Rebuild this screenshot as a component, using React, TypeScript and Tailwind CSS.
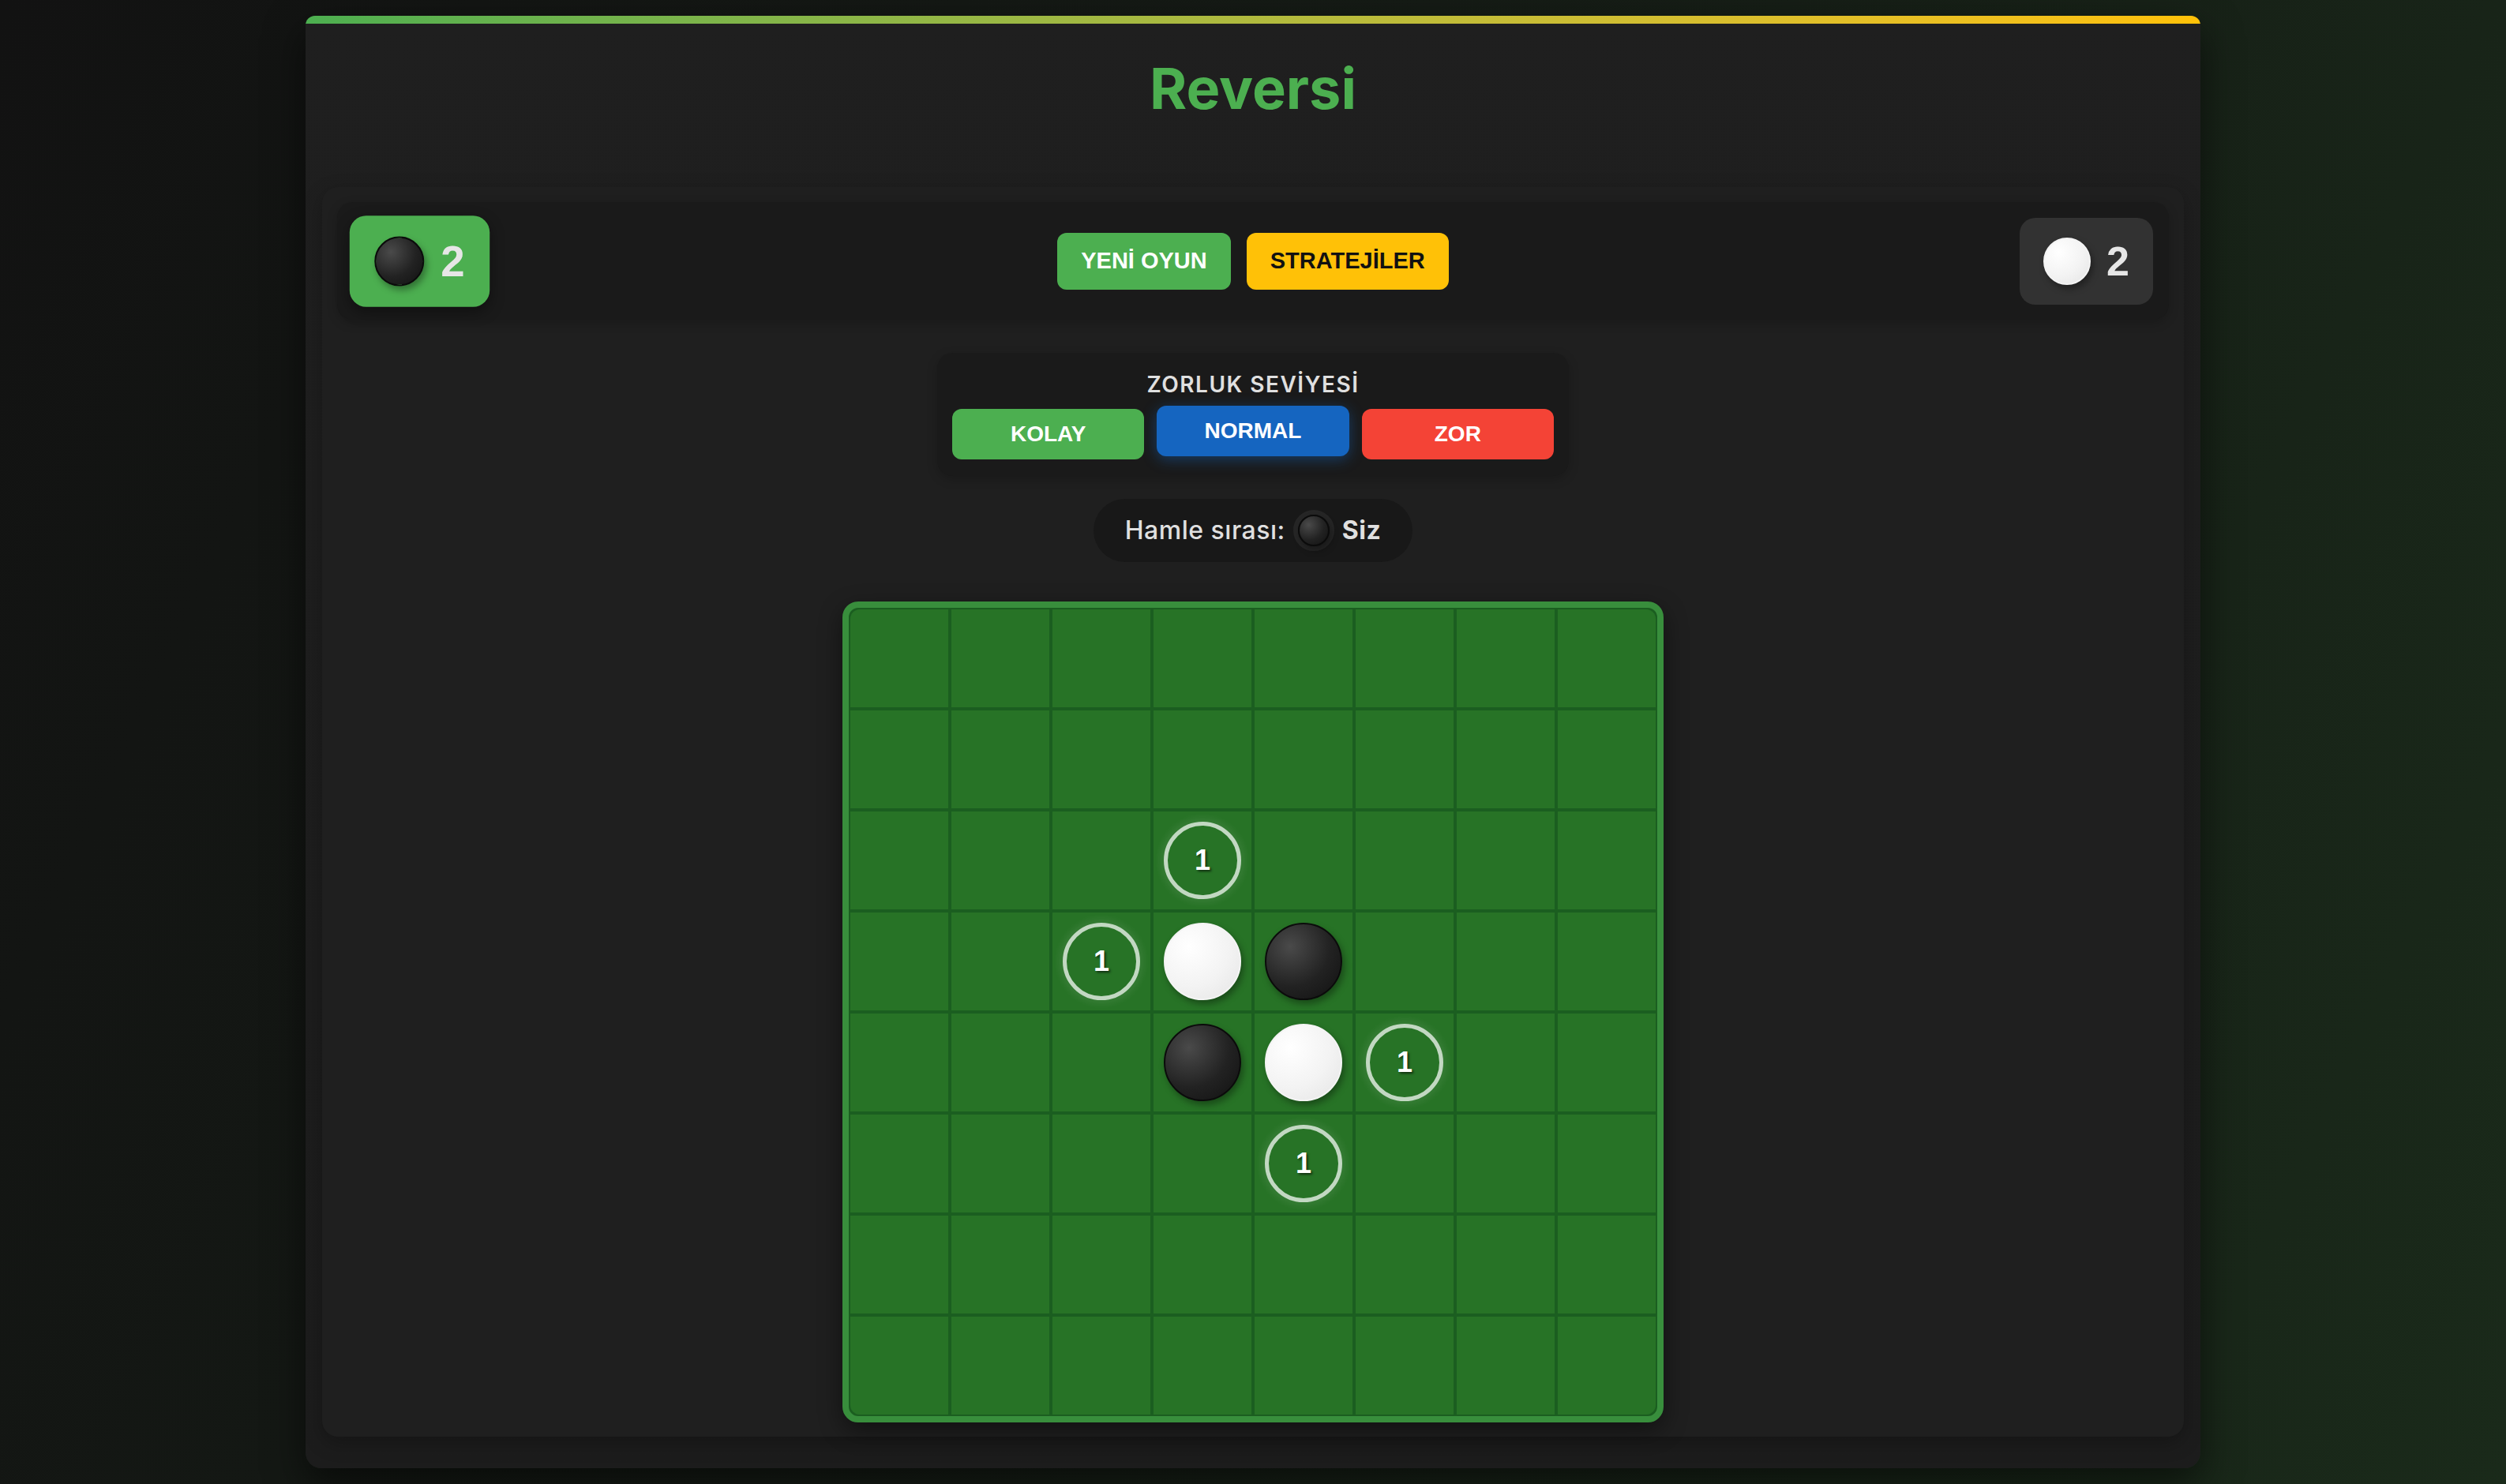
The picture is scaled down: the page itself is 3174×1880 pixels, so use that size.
import type { ReactNode } from 'react';

type Piece = 'b' | 'w' | null;

const board: Piece[][] = Array.from({ length: 8 }, () => Array<Piece>(8).fill(null));
board[3][3] = 'w';
board[3][4] = 'b';
board[4][3] = 'b';
board[4][4] = 'w';

const hints = new Set(['2-3', '3-2', '4-5', '5-4']);

const sans = "font-['Liberation_Sans',Arial,sans-serif]";

function Disc({ color, size }: { color: 'b' | 'w'; size: string }) {
  const look =
    color === 'b'
      ? 'bg-[radial-gradient(circle_at_32%_30%,#4a4a4a_0%,#222_55%,#111_100%)] border-[2px] border-[#0b0b0b]'
      : 'bg-[radial-gradient(circle_at_32%_30%,#ffffff_0%,#f3f3f3_55%,#e4e4e4_100%)] border-[2px] border-[#f4f4f4]';
  return (
    <div className={`${size} ${look} shrink-0 rounded-full shadow-[3px_5px_8px_rgba(0,0,0,0.35)]`} />
  );
}

function ScoreBox({ color, score, active }: { color: 'b' | 'w'; score: number; active?: boolean }) {
  return (
    <div
      className={`flex items-center gap-[20px] rounded-[20px] px-[30px] py-[25px] ${
        active ? 'scale-105 bg-[#4caf50] shadow-[0_6px_16px_rgba(0,0,0,0.35)]' : 'bg-[#323232]'
      }`}
    >
      <Disc color={color} size="h-[60px] w-[60px]" />
      <span className={`${sans} text-[52px] leading-[60px] font-bold text-[#e6e6e6]`}>{score}</span>
    </div>
  );
}

function Hint() {
  return (
    <div className="flex h-[98px] w-[98px] items-center justify-center rounded-full border-[5px] border-[rgba(255,255,255,0.72)] shadow-[0_0_8px_5px_rgba(255,255,255,0.07)]">
      <span className={`${sans} text-[36px] leading-none font-bold text-white [text-shadow:2px_2px_3px_rgba(0,0,0,0.6)]`}>
        1
      </span>
    </div>
  );
}

function Cell({ children }: { children?: ReactNode }) {
  return <div className="flex h-[124px] w-[124px] items-center justify-center bg-[#277326]">{children}</div>;
}

export default function App() {
  return (
    <div className="min-h-screen w-full bg-[linear-gradient(115deg,#121212_0%,#151b15_45%,#1a2a1a_100%)] py-[20px] font-['Inter','Noto_Sans',sans-serif]">
      <div className="mx-auto flex h-[1840px] w-[2400px] flex-col overflow-hidden rounded-t-[12px] rounded-b-[20px] bg-[linear-gradient(180deg,#1f1f1f_0%,#1c1c1c_100%)] shadow-[0_20px_50px_rgba(0,0,0,0.55)]">
        <div className="h-[10px] shrink-0 bg-gradient-to-r from-[#4caf50] to-[#ffc107]" />

        <h1 className="mt-[38px] text-center text-[72px] leading-[87px] font-bold text-[#4caf50]">Reversi</h1>

        <div className="mx-[21px] mt-[82px] flex flex-col items-center rounded-[20px] bg-[#1f1f1f] px-[19px] pt-[19px] pb-[18px] shadow-[0_8px_24px_rgba(0,0,0,0.25)]">
          {/* üst bar: skorlar + butonlar */}
          <div className="flex h-[149px] w-full items-center justify-between rounded-[20px] bg-[#1a1a1a] px-[20px] shadow-[0_4px_14px_rgba(0,0,0,0.2)]">
            <ScoreBox color="b" score={2} active />
            <div className="flex gap-[20px]">
              <button className={`${sans} h-[72px] rounded-[12px] bg-[#4caf50] px-[30px] text-[29px] font-bold text-white`}>
                YENİ OYUN
              </button>
              <button className={`${sans} h-[72px] rounded-[12px] bg-[#ffc107] px-[30px] text-[29px] font-bold text-[#111]`}>
                STRATEJİLER
              </button>
            </div>
            <ScoreBox color="w" score={2} />
          </div>

          {/* zorluk */}
          <div className="mt-[42px] flex w-[800px] flex-col items-center rounded-[20px] bg-[#1a1a1a] px-[19px] pt-[23px] pb-[21px] shadow-[0_4px_14px_rgba(0,0,0,0.2)]">
            <div className="text-[28px] leading-[34px] font-semibold tracking-[1.5px] text-[#e0e0e0]">ZORLUK SEVİYESİ</div>
            <div className="mt-[14px] flex w-full gap-[16px]">
              <button className={`${sans} h-[64px] flex-1 rounded-[12px] bg-[#4caf50] text-[28px] font-bold text-white`}>
                KOLAY
              </button>
              <button
                className={`${sans} h-[64px] flex-1 -translate-y-[4px] rounded-[12px] bg-[#1565c0] text-[28px] font-bold text-white shadow-[0_4px_18px_rgba(21,101,192,0.45)]`}
              >
                NORMAL
              </button>
              <button className={`${sans} h-[64px] flex-1 rounded-[12px] bg-[#f44336] text-[28px] font-bold text-white`}>
                ZOR
              </button>
            </div>
          </div>

          {/* sıra */}
          <div className="mt-[29px] flex h-[80px] items-center gap-[10px] rounded-full bg-[#181818] px-[40px] text-[32px] tracking-[0.5px] text-[#e0e0e0]">
            <span className="font-medium">Hamle sırası:</span>
            <div className="rounded-full border-[6px] border-[#262626]">
              <Disc color="b" size="h-[40px] w-[40px]" />
            </div>
            <span className="font-bold">Siz</span>
          </div>

          {/* tahta */}
          <div className="mt-[50px] rounded-[20px] border-[8px] border-[#388e3c] bg-[#1b5e20] p-[2px] shadow-[0_10px_30px_rgba(0,0,0,0.45)]">
            <div className="grid grid-cols-8 gap-[4px] overflow-hidden rounded-[12px]">
              {board.map((row, r) =>
                row.map((p, c) => (
                  <Cell key={`${r}-${c}`}>
                    {p ? (
                      <Disc color={p} size="h-[98px] w-[98px]" />
                    ) : hints.has(`${r}-${c}`) ? (
                      <Hint />
                    ) : null}
                  </Cell>
                )),
              )}
            </div>
          </div>
        </div>
      </div>
    </div>
  );
}
